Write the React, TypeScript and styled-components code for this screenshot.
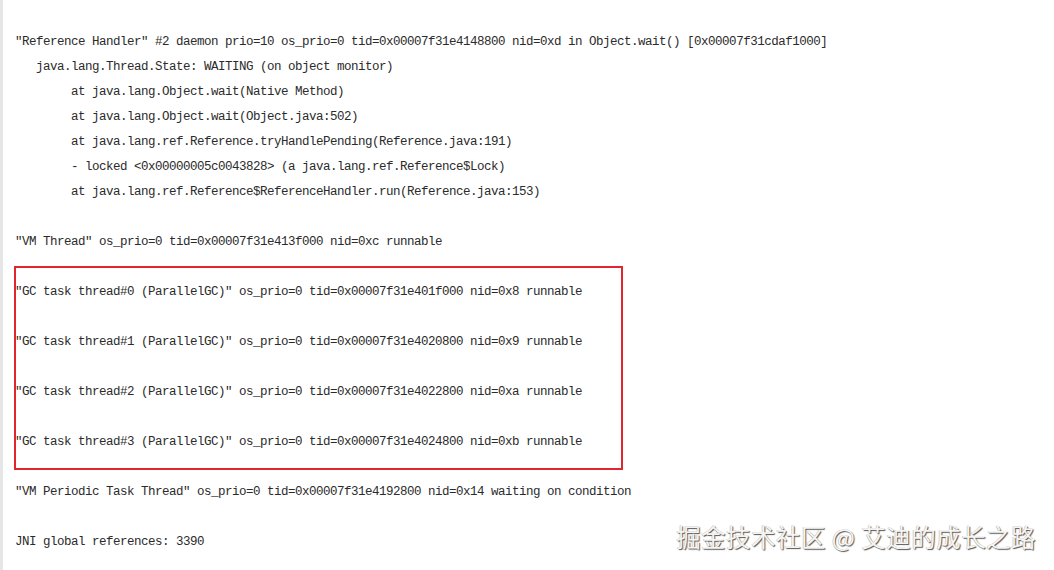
import React from "react";
import styled, { createGlobalStyle } from "styled-components";

const Global = createGlobalStyle`
  html, body { margin: 0; padding: 0; background: #ffffff; }
  body { overflow: hidden; }
`;

const Page = styled.div`
  position: relative;
  min-height: 100vh;
  box-sizing: border-box;
  border-left: 3px solid #e6e6e6;
  padding: 30px 0 0 12px;
  background: #ffffff;
`;

const Code = styled.div`
  display: flex;
  flex-direction: column;
  font-family: "Liberation Mono", "DejaVu Sans Mono", monospace;
  font-size: 12.5px;
  letter-spacing: -0.5px;
  color: #2b2b2b;
`;

const Line = styled.div<{ $indent?: number }>`
  height: 25px;
  line-height: 25px;
  white-space: pre;
  padding-left: ${(p) => (p.$indent ?? 0) * 7}px;
`;

const Highlight = styled.div`
  position: relative;
  display: flex;
  flex-direction: column;
  &::after {
    content: "";
    position: absolute;
    left: -1px;
    top: -14px;
    width: 609px;
    height: 204px;
    box-sizing: border-box;
    border: 2px solid #e3262d;
    pointer-events: none;
  }
`;

const Watermark = styled.div`
  position: absolute;
  right: 18px;
  bottom: 16px;
  font-family: "Noto Sans CJK SC", "Noto Sans", sans-serif;
  font-size: 24.5px;
  letter-spacing: 0.45px;
  color: #f4f4f4;
  text-shadow: 1px 1px 1px #555, -0.5px -0.5px 0 #bbb;
  white-space: pre;
`;

const gcLines = [
  '"GC task thread#0 (ParallelGC)" os_prio=0 tid=0x00007f31e401f000 nid=0x8 runnable',
  '"GC task thread#1 (ParallelGC)" os_prio=0 tid=0x00007f31e4020800 nid=0x9 runnable',
  '"GC task thread#2 (ParallelGC)" os_prio=0 tid=0x00007f31e4022800 nid=0xa runnable',
  '"GC task thread#3 (ParallelGC)" os_prio=0 tid=0x00007f31e4024800 nid=0xb runnable',
];

export default function App() {
  return (
    <>
      <Global />
      <Page>
        <Code>
          <Line>{'"Reference Handler" #2 daemon prio=10 os_prio=0 tid=0x00007f31e4148800 nid=0xd in Object.wait() [0x00007f31cdaf1000]'}</Line>
          <Line $indent={3}>java.lang.Thread.State: WAITING (on object monitor)</Line>
          <Line $indent={8}>at java.lang.Object.wait(Native Method)</Line>
          <Line $indent={8}>at java.lang.Object.wait(Object.java:502)</Line>
          <Line $indent={8}>at java.lang.ref.Reference.tryHandlePending(Reference.java:191)</Line>
          <Line $indent={8}>{"- locked <0x00000005c0043828> (a java.lang.ref.Reference$Lock)"}</Line>
          <Line $indent={8}>{"at java.lang.ref.Reference$ReferenceHandler.run(Reference.java:153)"}</Line>
          <Line> </Line>
          <Line>{'"VM Thread" os_prio=0 tid=0x00007f31e413f000 nid=0xc runnable'}</Line>
          <Line> </Line>
          <Highlight>
            {gcLines.map((l, i) => (
              <React.Fragment key={i}>
                {i > 0 && <Line> </Line>}
                <Line>{l}</Line>
              </React.Fragment>
            ))}
          </Highlight>
          <Line> </Line>
          <Line>{'"VM Periodic Task Thread" os_prio=0 tid=0x00007f31e4192800 nid=0x14 waiting on condition'}</Line>
          <Line> </Line>
          <Line>JNI global references: 3390</Line>
        </Code>
        <Watermark>掘金技术社区 @ 艾迪的成长之路</Watermark>
      </Page>
    </>
  );
}
